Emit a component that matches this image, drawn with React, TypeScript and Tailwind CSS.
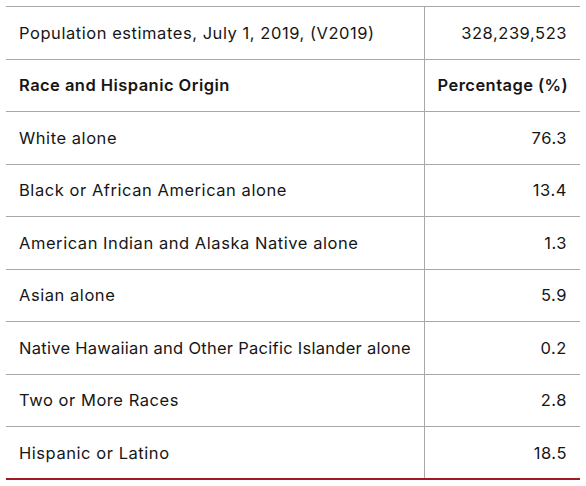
import React from "react";

const rows = [
  { label: "White alone", value: "76.3" },
  { label: "Black or African American alone", value: "13.4" },
  { label: "American Indian and Alaska Native alone", value: "1.3" },
  { label: "Asian alone", value: "5.9" },
  { label: "Native Hawaiian and Other Pacific Islander alone", value: "0.2", tight: true },
  { label: "Two or More Races", value: "2.8" },
  { label: "Hispanic or Latino", value: "18.5" },
];

export default function App() {
  return (
    <div className="bg-white w-[586px] h-[486px] pt-[6px] pl-[6px] font-['Inter',sans-serif] text-[#161616]">
      <table className="w-[574px] table-fixed border-collapse text-[16.5px] leading-6 tracking-[0.55px] whitespace-nowrap">
        <colgroup>
          <col className="w-[418px]" />
          <col />
        </colgroup>
        <tbody>
          <tr className="h-[52.5px] border-t border-[#a8a8a8]">
            <td className="px-[13px]">Population estimates, July 1, 2019, (V2019)</td>
            <td className="border-l border-[#a8a8a8] px-[13px] text-right">328,239,523</td>
          </tr>
          <tr className="h-[52.5px] border-t border-[#a8a8a8] font-semibold tracking-[0.45px]">
            <td className="px-[13px]">Race and Hispanic Origin</td>
            <td className="border-l border-[#a8a8a8] px-[13px] text-right">Percentage (%)</td>
          </tr>
          {rows.map((r, i) => (
            <tr
              key={i}
              className={
                i === rows.length - 1
                  ? "h-[52.5px] border-t border-b-2 border-t-[#a8a8a8] border-b-[#a2191f]"
                  : "h-[52.5px] border-t border-[#a8a8a8]"
              }
            >
              <td className={r.tight ? "px-[13px] tracking-[0.27px]" : "px-[13px]"}>{r.label}</td>
              <td className="border-l border-[#a8a8a8] px-[13px] text-right">{r.value}</td>
            </tr>
          ))}
        </tbody>
      </table>
    </div>
  );
}
